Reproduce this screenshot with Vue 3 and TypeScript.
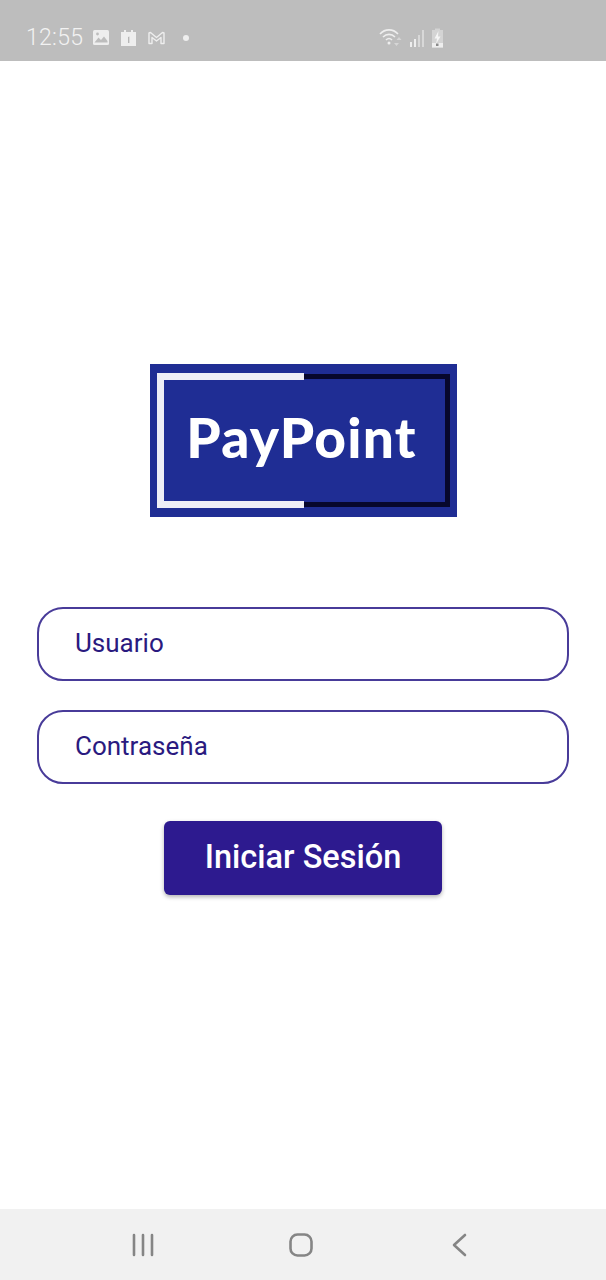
<template>
  <div class="screen">
    <header class="status-bar">
      <div class="status-left">
        <span class="clock">12:55</span>
        <svg class="ico" width="18" height="17" viewBox="0 0 17 17">
          <rect x="0.5" y="1" width="16" height="15" rx="1.5" fill="#eeeeee" />
          <path d="M2 13.5 L6 8.5 L8.5 11 L11.5 7.5 L15 12 V13.5 Z" fill="#bdbdbd" />
          <circle cx="5" cy="5" r="1.4" fill="#bdbdbd" />
        </svg>
        <svg class="ico" width="17" height="18" viewBox="0 0 17 18">
          <path d="M1 3 H4 V1 H6 V3 H11 V1 H13 V3 H16 V17 H1 Z" fill="#eeeeee" />
          <path d="M8.2 8 L9.3 7.4 V14 H8.2 Z" fill="#a8a8a8" />
        </svg>
        <svg class="ico" width="19" height="14" viewBox="0 0 18 14">
          <path d="M1.5 12.5 V2 L3 1.5 L9 6.5 L15 1.5 L16.5 2 V12.5 H13.5 V6.5 L9 10 L4.5 6.5 V12.5 Z" fill="none" stroke="#eeeeee" stroke-width="1.4" stroke-linejoin="round" />
        </svg>
        <span class="dot"></span>
      </div>
      <div class="status-right">
        <svg width="24" height="20" viewBox="0 0 24 20">
          <path d="M1 6 C6 0.5 14 0.5 19 6" fill="none" stroke="#eeeeee" stroke-width="1.6" />
          <path d="M4 9 C7.5 5.5 12.5 5.5 16 9" fill="none" stroke="#eeeeee" stroke-width="1.6" />
          <path d="M7 12 C9 10 11 10 13 12" fill="none" stroke="#eeeeee" stroke-width="1.6" />
          <circle cx="10" cy="15" r="1.5" fill="#eeeeee" />
          <path d="M20 9 L22.5 12 H17.5 Z M15 15 L17.5 18 L20 15 Z" fill="#d6d6d6" />
        </svg>
        <svg width="16" height="18" viewBox="0 0 16 18">
          <rect x="1" y="13" width="2" height="5" fill="#eeeeee" />
          <rect x="5" y="10" width="2" height="8" fill="#eeeeee" />
          <rect x="9" y="6" width="2" height="12" fill="#d8d8d8" />
          <rect x="13" y="1" width="2" height="17" fill="#d8d8d8" />
        </svg>
        <svg width="13" height="20" viewBox="0 0 13 20">
          <path d="M4 2 V0.5 H9 V2 H12 V19.5 H1 V2 Z" fill="#d4d4d4" />
          <rect x="1" y="15" width="11" height="4.5" fill="#eeeeee" />
          <path d="M7.5 3 L3.5 10.5 H6 L5 16 L9.5 8.5 H7 Z" fill="#f5f5f5" />
          <rect x="5" y="15.5" width="2.5" height="2.5" fill="#8a8a8a" />
        </svg>
      </div>
    </header>

    <main class="content">
      <div class="logo">
        <span class="logo-frame-dark"></span>
        <span class="logo-frame-light"></span>
        <span class="logo-text">PayPoint</span>
      </div>

      <form class="login" @submit.prevent>
        <input v-model="usuario" class="field" type="text" placeholder="Usuario" />
        <input v-model="clave" class="field" type="password" placeholder="Contraseña" />
        <button class="submit" type="submit">Iniciar Sesión</button>
      </form>
    </main>

    <footer class="nav-bar">
      <svg class="nav-recents" width="22" height="24" viewBox="0 0 22 24">
        <path d="M2 2 V22 M11 2 V22 M20 2 V22" fill="none" stroke="#858585" stroke-width="2.6" stroke-linecap="round" />
      </svg>
      <svg class="nav-home" width="24" height="24" viewBox="0 0 24 24">
        <rect x="1.5" y="1.5" width="21" height="21" rx="7" fill="none" stroke="#858585" stroke-width="2.6" />
      </svg>
      <svg width="16" height="24" viewBox="0 0 16 24">
        <path d="M14 2 L3 12 L14 22" fill="none" stroke="#858585" stroke-width="2.6" stroke-linecap="round" stroke-linejoin="round" />
      </svg>
    </footer>
  </div>
</template>

<script setup lang="ts">
import { ref } from 'vue'

const usuario = ref('')
const clave = ref('')
</script>

<style>
html,
body {
  margin: 0;
  background: #fff;
}
</style>

<style scoped>
.screen {
  width: 606px;
  height: 1280px;
  display: flex;
  flex-direction: column;
  background: #fff;
  font-family: Roboto, 'Liberation Sans', sans-serif;
  overflow: hidden;
}

.status-bar {
  height: 61px;
  flex-shrink: 0;
  box-sizing: border-box;
  background: #bdbdbd;
  display: flex;
  align-items: center;
  justify-content: space-between;
  padding: 14px 162px 0 26px;
}
.status-left {
  display: flex;
  align-items: center;
}
.clock {
  font-size: 23px;
  font-weight: 300;
  color: #f2f2f2;
  letter-spacing: 0.3px;
  margin-right: 9px;
}
.ico {
  margin-right: 10px;
}
.dot {
  width: 6px;
  height: 6px;
  border-radius: 50%;
  background: #eeeeee;
  margin-left: 7px;
}
.status-right {
  display: flex;
  align-items: center;
  gap: 6px;
}

.content {
  flex: 1;
  display: flex;
  flex-direction: column;
  align-items: center;
  padding-top: 303px;
}

.logo {
  position: relative;
  width: 307px;
  height: 153px;
  background: #1f2d94;
  display: flex;
  align-items: center;
  justify-content: center;
}
.logo-frame-dark {
  position: absolute;
  left: 154px;
  top: 10px;
  width: 146px;
  height: 133px;
  box-sizing: border-box;
  border: 5px solid #07072c;
  border-left: 0;
}
.logo-frame-light {
  position: absolute;
  left: 7px;
  top: 9px;
  width: 147px;
  height: 135px;
  box-sizing: border-box;
  border: 7px solid #eeeef6;
  border-right: 0;
}
.logo-text {
  font-family: Lato, 'Open Sans', sans-serif;
  font-weight: 900;
  font-size: 55px;
  letter-spacing: 1.2px;
  line-height: 1;
  color: #fff;
  margin: 0 3px 7px 0;
}

.login {
  margin-top: 90px;
  width: 532px;
  display: flex;
  flex-direction: column;
  align-items: center;
}
.field {
  width: 100%;
  height: 74px;
  box-sizing: border-box;
  border: 2px solid #483b99;
  border-radius: 26px;
  padding: 0 36px 2px;
  margin-bottom: 29px;
  background: #fff;
  outline: none;
  font-family: inherit;
  font-size: 26px;
  color: #2a1a80;
}
.field::placeholder {
  color: #2a1a80;
  opacity: 1;
}
.submit {
  width: 278px;
  height: 74px;
  margin-top: 8px;
  padding: 0 0 3px;
  border: none;
  border-radius: 6px;
  background: #2d1a8f;
  color: #fff;
  font-family: inherit;
  font-size: 32.5px;
  font-weight: 500;
  box-shadow: 0 2px 4px rgba(0, 0, 0, 0.3);
  cursor: pointer;
}

.nav-bar {
  height: 71px;
  flex-shrink: 0;
  background: #f1f1f1;
  display: flex;
  align-items: center;
  box-sizing: border-box;
  padding: 0 0 0 132px;
}
.nav-recents {
  margin-right: 135px;
}
.nav-home {
  margin-right: 138px;
}
</style>
